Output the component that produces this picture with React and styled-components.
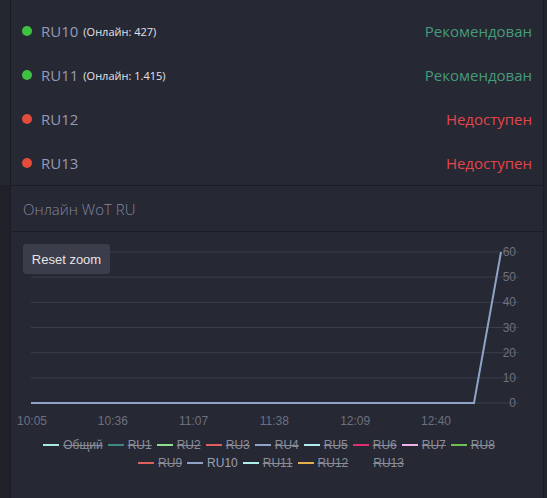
import React from "react";
import styled, { createGlobalStyle } from "styled-components";

const GlobalStyle = createGlobalStyle`
  html, body {
    margin: 0;
    padding: 0;
    background: #22242d;
  }
  body {
    font-family: "Open Sans", "Liberation Sans", sans-serif;
  }
`;

const Page = styled.div`
  display: flex;
  width: 547px;
  height: 498px;
  overflow: hidden;
  background: #23252e;
`;

const Gutter = styled.div`
  width: 10px;
  flex-shrink: 0;
  background: linear-gradient(#252730 0 185px, #1f2028 185px);
  border-right: 1px solid #1a1b22;
`;

const Panel = styled.div`
  width: 532px;
  flex-shrink: 0;
  display: flex;
  flex-direction: column;
  background: #262834;
  border-right: 1px solid #1c1d24;
`;

const ServerList = styled.div`
  display: flex;
  flex-direction: column;
  padding-top: 9px;
  border-bottom: 1px solid #1c1d25;
`;

const Row = styled.div`
  height: 44px;
  display: flex;
  align-items: center;
  padding: 0 11px 0 11px;
`;

const Dot = styled.span`
  width: 10px;
  height: 10px;
  border-radius: 50%;
  background: ${(p) => (p.$ok ? "#3fc23f" : "#e34c3b")};
  margin-right: 9px;
  flex-shrink: 0;
`;

const Name = styled.span`
  font-size: 15px;
  color: #9799b6;
`;

const Online = styled.span`
  font-size: 11px;
  color: #e4e4ea;
  margin-left: 5px;
  margin-top: 1px;
`;

const Status = styled.span`
  margin-left: auto;
  font-size: 15px;
  color: ${(p) => (p.$ok ? "#459b7a" : "#e2454b")};
`;

const Header = styled.div`
  height: 45px;
  display: flex;
  align-items: center;
  padding-left: 12px;
  font-size: 15px;
  font-weight: 300;
  color: #83859f;
  border-bottom: 1px solid #1c1d25;
`;

const ChartBox = styled.div`
  position: relative;
  flex: 1;
  display: flex;
  flex-direction: column;
`;

const ResetButton = styled.button`
  position: absolute;
  left: 12px;
  top: 12px;
  width: 87px;
  height: 30px;
  border: none;
  border-radius: 3px;
  background: #3b3d4a;
  color: #e4e4e8;
  font-family: "Liberation Sans", Arial, sans-serif;
  font-size: 13px;
  padding: 0;
`;

const Legend = styled.div`
  display: flex;
  flex-direction: column;
  padding-top: 4px;
  font-family: "Liberation Sans", Arial, sans-serif;
  font-size: 12px;
`;

const LegendRow = styled.div`
  display: flex;
  justify-content: center;
  height: 18px;
  align-items: center;
  padding-right: ${(p) => p.$shift || 0}px;
`;

const Item = styled.span`
  display: flex;
  align-items: center;
  margin: 0 2.5px;
`;

const Swatch = styled.span`
  width: 16px;
  height: 2px;
  background: ${(p) => p.$color};
  margin-right: 4px;
`;

const Label = styled.span`
  color: ${(p) => (p.$hidden ? "#8a8d99" : "#9da0b2")};
  text-decoration: ${(p) => (p.$hidden ? "line-through" : "none")};
`;

const servers = [
  { name: "RU10", online: "427", ok: true },
  { name: "RU11", online: "1.415", ok: true },
  { name: "RU12", ok: false },
  { name: "RU13", ok: false },
];

const legendRows = [
  [
    ["Общий", "#a9e7e6", true],
    ["RU1", "#3d8784", true],
    ["RU2", "#8fe08b", true],
    ["RU3", "#e0605e", true],
    ["RU4", "#8ea3c6", true],
    ["RU5", "#b0eeee", true],
    ["RU6", "#dd2f72", true],
    ["RU7", "#eeb1ee", true],
    ["RU8", "#6fbf52", true],
  ],
  [
    ["RU9", "#e0605e", true],
    ["RU10", "#8ea3c6", false],
    ["RU11", "#b0eeee", true],
    ["RU12", "#e3ae4f", true],
    ["RU13", "transparent", true],
  ],
];

const yTicks = [60, 50, 40, 30, 20, 10, 0];
const xTicks = ["10:05", "10:36", "11:07", "11:38", "12:09", "12:40"];

function Chart() {
  const top = 20;
  const step = 25.17;
  const zero = top + step * 6;
  return (
    <svg width="532" height="200" style={{ display: "block" }}>
      {yTicks.map((v, i) => {
        const y = top + step * i;
        return (
          <g key={v}>
            <line x1="20" x2="508" y1={y} y2={y} stroke="#3b3e4b" strokeWidth="1" />
            <text
              x="505"
              y={y + 4}
              textAnchor="end"
              fill="#6d7080"
              fontSize="12"
              fontFamily="Liberation Sans, Arial, sans-serif"
            >
              {v}
            </text>
          </g>
        );
      })}
      <line x1="20" x2="463" y1={zero} y2={zero} stroke="#8c92a2" strokeWidth="2" />
      <polyline
        points={`20,${zero} 463,${zero} 490,${top}`}
        fill="none"
        stroke="#8ea3c6"
        strokeWidth="2"
      />
      {xTicks.map((t, i) => (
        <text
          key={t}
          x={21 + i * 80.8}
          y="193"
          textAnchor="middle"
          fill="#6d7080"
          fontSize="12"
          fontFamily="Liberation Sans, Arial, sans-serif"
        >
          {t}
        </text>
      ))}
    </svg>
  );
}

export default function App() {
  return (
    <>
      <GlobalStyle />
      <Page>
        <Gutter />
        <Panel>
          <ServerList>
            {servers.map((s) => (
              <Row key={s.name}>
                <Dot $ok={s.ok} />
                <Name>{s.name}</Name>
                {s.online && <Online>(Онлайн: {s.online})</Online>}
                <Status $ok={s.ok}>{s.ok ? "Рекомендован" : "Недоступен"}</Status>
              </Row>
            ))}
          </ServerList>
          <Header>Онлайн WoT RU</Header>
          <ChartBox>
            <Chart />
            <ResetButton>Reset zoom</ResetButton>
            <Legend>
              {legendRows.map((row, i) => (
                <LegendRow key={i} $shift={i === 0 ? 16 : 12}>
                  {row.map(([label, color, hidden]) => (
                    <Item key={label}>
                      <Swatch $color={color} />
                      <Label $hidden={hidden}>{label}</Label>
                    </Item>
                  ))}
                </LegendRow>
              ))}
            </Legend>
          </ChartBox>
        </Panel>
      </Page>
    </>
  );
}
